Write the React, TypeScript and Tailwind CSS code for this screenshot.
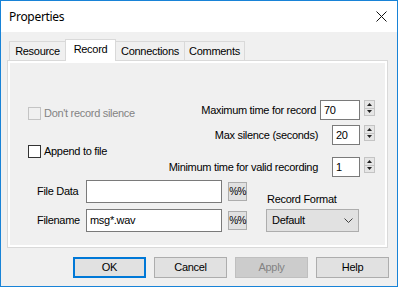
import React from 'react';

const font = "font-['Liberation_Sans',Arial,sans-serif] text-[11px] tracking-[-0.3px]";

const Spinner: React.FC = () => (
  <div className="ml-[4px] self-start flex flex-col w-[11px] h-[16px] border border-[#c4c4c4] bg-[#e6e6e6]">
    <div className="flex-1 flex items-center justify-center border-b border-[#c4c4c4]">
      <svg width="5" height="3" viewBox="0 0 5 3"><path d="M0 3h5L2.5 0z" fill="#222" /></svg>
    </div>
    <div className="flex-1 flex items-center justify-center">
      <svg width="5" height="3" viewBox="0 0 5 3"><path d="M0 0h5L2.5 3z" fill="#222" /></svg>
    </div>
  </div>
);

const NumRow: React.FC<{ label: string; value: string; wide?: boolean; className?: string }> = ({ label, value, wide, className }) => (
  <div className={`flex items-center justify-end h-[20px] ${className ?? ''}`}>
    <span className={wide ? 'mr-[4px]' : 'mr-[14px]'}>{label}</span>
    <div className={`h-[20px] ${wide ? 'w-[40px]' : 'w-[28px]'} border border-[#7a7a7a] bg-white pl-[3px] flex items-center`}>
      {value}
    </div>
    <Spinner />
  </div>
);

const Check: React.FC<{ label: string; disabled?: boolean; className?: string }> = ({ label, disabled, className }) => (
  <div className={`flex items-center h-[13px] ${className ?? ''}`}>
    <div className={`w-[13px] h-[13px] border ${disabled ? 'border-[#c4c4c4] bg-[#f0f0f0]' : 'border-[#333] bg-white'}`} />
    <span className={`ml-[3px] ${disabled ? 'text-[#838383]' : 'text-black'}`}>{label}</span>
  </div>
);

const PctButton: React.FC = () => (
  <div className="ml-[6px] w-[19px] h-[19px] border border-[#adadad] bg-[#e1e1e1] flex items-center justify-center text-[10px] tracking-[-0.6px] font-normal">
    %%
  </div>
);

const Tab: React.FC<{ label: string; w: string; active?: boolean; edges: string }> = ({ label, w, active, edges }) => (
  <div
    className={`${w} ${edges} border-[#d9d9d9] flex items-center justify-center ${
      active ? 'relative z-10 h-[22px] bg-white pb-[3px]' : 'h-[20px] bg-[#f0f0f0]'
    }`}
  >
    {label}
  </div>
);

export default function App() {
  return (
    <div className={`w-[399px] h-[288px] bg-white text-black ${font}`}>
      <div className="w-[398px] h-[287px] border border-[#1883d7] bg-[#f0f0f0] flex flex-col">
        {/* title bar */}
        <div className="h-[31px] bg-white flex items-center justify-between pl-[8px] pr-[10px]">
          <span className="font-['Noto_Sans',sans-serif] text-[12px] tracking-[-0.3px]">Properties</span>
          <svg width="11" height="11" viewBox="0 0 11 11">
            <path d="M0.5 0.5l10 10M10.5 0.5l-10 10" stroke="#111" strokeWidth="1" />
          </svg>
        </div>

        {/* tabs */}
        <div className="mt-[7px] pl-[8px] flex items-end h-[22px]">
          <Tab label="Resource" w="w-[56px]" edges="border-l border-t" />
          <Tab label="Record" w="w-[51px]" edges="border-l border-t border-r" active />
          <Tab label="Connections" w="w-[69px]" edges="border-t border-r" />
          <Tab label="Comments" w="w-[60px]" edges="border-t border-r" />
        </div>

        {/* panel */}
        <div className="-mt-[1px] ml-[6px] w-[381px] h-[188px] border border-[#d9d9d9] bg-white p-[2px]">
          <div className="h-full bg-[#f0f0f0] flex flex-col">
            <div className="flex justify-between pt-[37px] pr-[10px]">
              <div className="pl-[18px] pt-[7px]">
                <Check label="Don't record silence" disabled />
                <Check label="Append to file" className="mt-[25px]" />
              </div>
              <div className="flex flex-col">
                <NumRow label="Maximum time for record" value="70" wide />
                <NumRow label="Max silence (seconds)" value="20" className="mt-[5px]" />
                <NumRow label="Minimum time for valid recording" value="1" className="mt-[12px]" />
              </div>
            </div>

            <div className="mt-[3px] pl-[27px] flex items-end">
              <div className="flex flex-col gap-[6px]">
                <div className="flex items-center h-[23px]">
                  <span className="w-[49px]">File Data</span>
                  <div className="w-[136px] h-[23px] border border-[#7a7a7a] bg-white" />
                  <PctButton />
                </div>
                <div className="flex items-center h-[23px]">
                  <span className="w-[49px]">Filename</span>
                  <div className="w-[136px] h-[23px] border border-[#7a7a7a] bg-white pl-[3px] flex items-center">
                    msg*.wav
                  </div>
                  <PctButton />
                </div>
              </div>
              <div className="ml-[19px] flex flex-col">
                <span className="ml-[1px] mb-[3px] leading-[13px]">Record Format</span>
                <div className="w-[93px] h-[23px] border border-[#adadad] bg-[#e1e1e1] pl-[5px] pr-[5px] flex items-center justify-between">
                  <span>Default</span>
                  <svg width="9" height="5" viewBox="0 0 9 5">
                    <path d="M0.5 0.5l4 4 4-4" stroke="#404040" strokeWidth="1" fill="none" />
                  </svg>
                </div>
              </div>
            </div>
          </div>
        </div>

        {/* buttons */}
        <div className="mt-[9px] pl-[72px] flex gap-[8px]">
          <div className="w-[73px] h-[21px] border-2 border-[#0078d7] bg-[#e1e1e1] flex items-center justify-center">OK</div>
          <div className="w-[73px] h-[21px] border border-[#adadad] bg-[#e1e1e1] flex items-center justify-center">Cancel</div>
          <div className="w-[73px] h-[21px] border border-[#bfbfbf] bg-[#cccccc] text-[#838383] flex items-center justify-center">Apply</div>
          <div className="w-[73px] h-[21px] border border-[#adadad] bg-[#e1e1e1] flex items-center justify-center">Help</div>
        </div>
      </div>
    </div>
  );
}
